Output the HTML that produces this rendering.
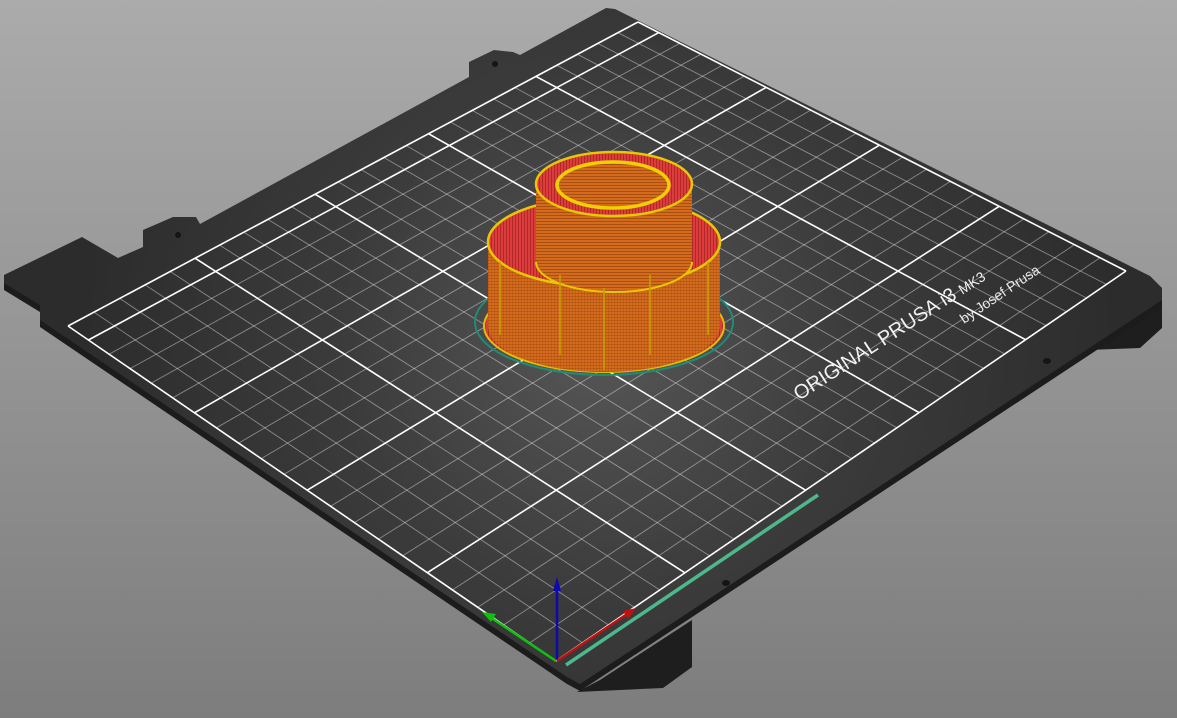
<!DOCTYPE html>
<html><head><meta charset="utf-8"><style>
html,body{margin:0;padding:0;width:1177px;height:718px;overflow:hidden;background:#999}
svg{display:block}
</style></head><body>
<svg id="s" width="1177" height="718" viewBox="0 0 1177 718" xmlns="http://www.w3.org/2000/svg">
<defs>
<linearGradient id="bg" x1="0" y1="0" x2="0" y2="1"><stop offset="0" stop-color="#ababab"/><stop offset="1" stop-color="#7d7d7d"/></linearGradient>
<radialGradient id="bed" cx="600" cy="340" r="520" gradientUnits="userSpaceOnUse"><stop offset="0" stop-color="#575757"/><stop offset="0.5" stop-color="#3b3b3b"/><stop offset="1" stop-color="#2c2c2c"/></radialGradient>
<pattern id="or" width="4" height="3" patternUnits="userSpaceOnUse"><rect width="4" height="3" fill="#d46a1c"/><rect y="2" width="4" height="1" fill="#a85012"/></pattern>
<pattern id="orv" width="3" height="4" patternUnits="userSpaceOnUse"><rect width="3" height="4" fill="#d46a1c"/><rect x="2" width="1" height="4" fill="#b05614"/></pattern>
<pattern id="rd" width="3" height="4" patternUnits="userSpaceOnUse"><rect width="3" height="4" fill="#dc3c3c"/><rect x="2" width="1" height="4" fill="#b02828"/></pattern>
</defs>
<rect width="1177" height="718" fill="url(#bg)"/>
<polygon points="1095,335 1162,300 1162,328 1140,348 1088,350" fill="#1e1e1e"/>
<polygon points="600,680 692,620 692,667 663,688 577,692" fill="#1e1e1e"/>
<polygon transform="translate(0,7)" points="606,8 520,55 513,52 494,50 469,62 469,77 200,224 196,217 173,217 143,230 143,247 118,258 82,237 4,275 4,283 40,305 40,320 567,677 580,684 1162,300 1162,288 1150,276 615,9" fill="#1c1c1c"/>
<polygon points="606,8 520,55 513,52 494,50 469,62 469,77 200,224 196,217 173,217 143,230 143,247 118,258 82,237 4,275 4,283 40,305 40,320 567,677 580,684 1162,300 1162,288 1150,276 615,9" fill="url(#bed)"/>
<g id="grid"></g>
<g fill="#151515">
<ellipse cx="1047" cy="361" rx="4" ry="3"/><ellipse cx="726" cy="583" rx="4" ry="3"/><ellipse cx="178" cy="235" rx="3" ry="3"/><ellipse cx="495" cy="64" rx="3" ry="3"/>
</g>
<text x="0" y="0" transform="translate(799,401) rotate(-33)" fill="#f2f2f2" font-family="Liberation Sans, sans-serif" font-size="20">ORIGINAL PRUSA i3 <tspan font-size="14">MK3</tspan></text>
<text x="0" y="0" transform="translate(964,324) rotate(-34)" fill="#e8e8e8" font-family="Liberation Sans, sans-serif" font-size="14">by Josef Prusa</text>
<ellipse cx="604" cy="322" rx="129" ry="53" fill="none" stroke="#1f8c78" stroke-width="2"/>
<ellipse cx="604" cy="326" rx="120" ry="46" fill="url(#rd)" stroke="#e0c000" stroke-width="2"/>
<path d="M488 242 L488 326 A116 46 0 0 0 720 326 L720 242 Z" fill="url(#orv)"/>
<path d="M488 250 L488 326 A116 46 0 0 0 720 326 L720 250" fill="url(#or)" opacity="0.55"/>
<ellipse cx="604" cy="242" rx="116" ry="45" fill="url(#rd)" stroke="#e8c800" stroke-width="2.5"/>
<path d="M536 184 L536 262 A78 30 0 0 0 692 262 L692 184 Z" fill="url(#or)"/>
<path d="M536 262 A78 30 0 0 0 692 262" fill="none" stroke="#e8c800" stroke-width="2"/>
<ellipse cx="614" cy="184" rx="78" ry="32" fill="url(#rd)" stroke="#e8c800" stroke-width="2.5"/>
<ellipse cx="613" cy="185" rx="56" ry="23" fill="url(#or)" stroke="#f0d000" stroke-width="3.5"/>
<g stroke="#c8a000" stroke-width="2" opacity="0.8"><line x1="560" y1="275" x2="560" y2="355"/><line x1="650" y1="275" x2="650" y2="355"/><line x1="604" y1="288" x2="604" y2="370"/><line x1="500" y1="262" x2="500" y2="335"/><line x1="708" y1="262" x2="708" y2="335"/></g>
<line x1="566" y1="665" x2="818" y2="495" stroke="#4db88c" stroke-width="3.5"/>
<line x1="557" y1="660" x2="557" y2="588" stroke="#0a0ab0" stroke-width="2.5"/>
<polygon points="557,577 553,591 561,591" fill="#0a0ab0"/>
<line x1="556" y1="661" x2="490" y2="617" stroke="#10c010" stroke-width="2.5"/>
<polygon points="482,612 496,614 491,622" fill="#10c010"/>
<line x1="557" y1="661" x2="627" y2="614" stroke="#c01010" stroke-width="2.5"/>
<polygon points="636,608 623,611 628,619" fill="#c01010"/>
</svg>
<script>
(function(){
var src=[[0,0],[250,0],[250,210],[0,210]];
var dst=[[556,661],[1126,271],[638,22],[68,326]];
var A=[],b=[];
for(var i=0;i<4;i++){var x=src[i][0],y=src[i][1],u=dst[i][0],v=dst[i][1];
A.push([x,y,1,0,0,0,-u*x,-u*y]);b.push(u);
A.push([0,0,0,x,y,1,-v*x,-v*y]);b.push(v);}
var n=8;for(var c=0;c<n;c++){var p=c;for(var r=c+1;r<n;r++)if(Math.abs(A[r][c])>Math.abs(A[p][c]))p=r;
var t=A[c];A[c]=A[p];A[p]=t;t=b[c];b[c]=b[p];b[p]=t;
for(var r=0;r<n;r++){if(r==c)continue;var f=A[r][c]/A[c][c];for(var k=c;k<n;k++)A[r][k]-=f*A[c][k];b[r]-=f*b[c];}}
var h=[];for(var i=0;i<n;i++)h.push(b[i]/A[i][i]);
function m(x,y){var w=h[6]*x+h[7]*y+1;return [(h[0]*x+h[1]*y+h[2])/w,(h[3]*x+h[4]*y+h[5])/w];}
var g=document.getElementById('grid'),s='';
function L(a,b2,maj){s+='<line x1="'+a[0].toFixed(1)+'" y1="'+a[1].toFixed(1)+'" x2="'+b2[0].toFixed(1)+'" y2="'+b2[1].toFixed(1)+'" stroke="'+(maj?'#ffffff':'rgba(255,255,255,0.42)')+'" stroke-width="'+(maj?1.6:0.9)+'"/>';}
for(var x=0;x<=250;x+=10)L(m(x,0),m(x,210),x%50==0);
for(var y=0;y<=210;y+=10)L(m(0,y),m(250,y),y%50==0);
L(m(0,210),m(250,210),true);
g.innerHTML=s;
})();
</script>
</body></html>
